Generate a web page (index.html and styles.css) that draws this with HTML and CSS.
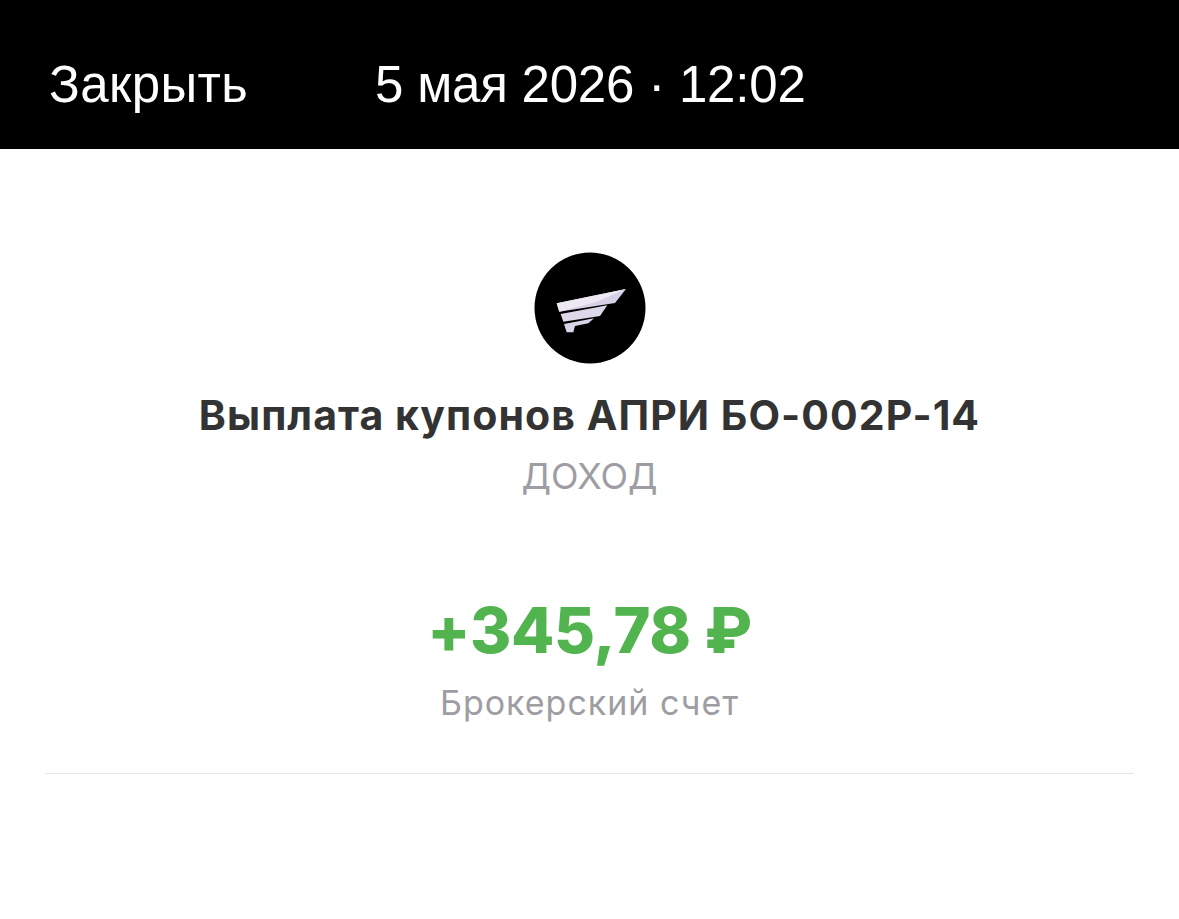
FILE: index.html
```html
<!DOCTYPE html>
<html lang="ru">
<head>
    <meta charset="UTF-8">
    <meta name="viewport" content="width=device-width, initial-scale=1.0">
    <title>Выплата купонов</title>
    <link rel="stylesheet" href="styles.css">
</head>
<body>
    <header class="topbar">
        <span class="close">Закрыть</span>
        <span class="date">5 мая 2026 · 12:02</span>
    </header>
    <main class="content">
        <svg class="logo" width="112" height="112" viewBox="0 0 112 112">
            <circle cx="56" cy="56" r="55.5" fill="#000"/>
            <path d="M22.700 51.300 L92 37 L81 51 L25.300 59.700 Z" fill="#d6d1e6"/>
            <path d="M22.700 51.300 L92 37 L62 50 L25.300 59.700 Z" fill="#ece9f4"/>
            <path d="M26.700 62 L73.300 53.300 L66 64 L29.300 69.700 Z" fill="#dcd8ea"/>
            <path d="M30 72 L60 66.300 L54.300 71.300 L41 74 L39.300 80.300 L32.700 80.300 Z" fill="#d9d5e8"/>
        </svg>
        <h1 class="title">Выплата купонов АПРИ БО-002Р-14</h1>
        <div class="kind">ДОХОД</div>
        <div class="amount">+345,78 ₽</div>
        <div class="account">Брокерский счет</div>
        <hr class="divider">
    </main>
</body>
</html>
```

FILE: styles.css
```css
body {
    font-family: Inter, 'Liberation Sans', Arial, sans-serif;
    background: #fff;
    margin: 0;
    padding: 0;
    min-height: 100vh;
}
.topbar {
    background: #000;
    color: #fff;
    height: 149px;
    display: flex;
    align-items: center;
    padding: 20px 0 0 49px;
    box-sizing: border-box;
    font-family: 'Liberation Sans', Arial, sans-serif;
    font-size: 51px;
}
.close {
    width: 326px;
    letter-spacing: 0.4px;
}
.date {
    letter-spacing: -0.2px;
}
.content {
    display: flex;
    flex-direction: column;
    align-items: center;
    padding: 103px 45px 0 45px;
}
.logo {
    display: block;
}
.title {
    margin: 26px 0 0 0;
    font-size: 41px;
    line-height: 50px;
    letter-spacing: 1.060px;
    font-weight: 700;
    color: #333;
}
.kind {
    margin-top: 13px;
    font-size: 36px;
    line-height: 46px;
    color: #9d9da3;
}
.amount {
    margin-top: 93px;
    font-size: 63px;
    line-height: 76px;
    letter-spacing: -0.3px;
    font-weight: 800;
    color: #52b44f;
}
.account {
    margin-top: 15px;
    font-size: 34px;
    line-height: 40px;
    letter-spacing: 1px;
    color: #9d9da3;
}
.divider {
    align-self: stretch;
    margin: 50px 0 0 0;
    border: none;
    border-top: 1px solid #e6e6e8;
}
```
